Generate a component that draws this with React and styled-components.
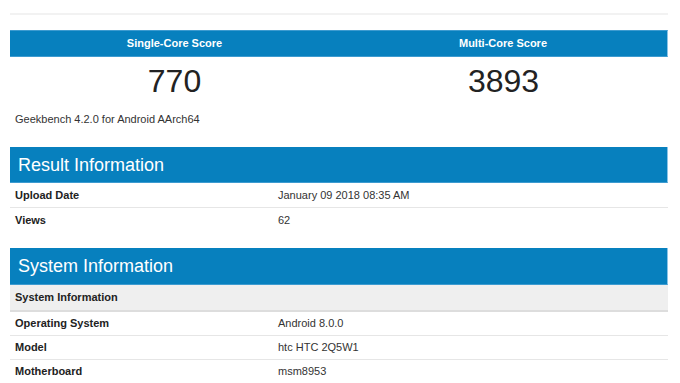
import React from "react";
import styled, { createGlobalStyle } from "styled-components";

const Global = createGlobalStyle`
  html, body { margin: 0; padding: 0; background: #fff; }
  body { font-family: "Liberation Sans", Arial, sans-serif; color: #222; }
`;

const BLUE = "#0780be";

const Page = styled.div`
  width: 658px;
  padding: 13px 0 0 10px;
`;

const TopRule = styled.div`
  height: 2px;
  background: #f2f2f2;
  margin-bottom: 15px;
`;

const ScoreGrid = styled.div`
  display: grid;
  grid-template-columns: 1fr 1fr;
`;

const ScoreHead = styled.div`
  height: 27px;
  background: ${BLUE};
  border-top: 1px solid #3d9bd0;
  border-bottom: 1px solid #3d9bd0;
  box-sizing: border-box;
  color: #fff;
  font-weight: bold;
  font-size: 11px;
  line-height: 25px;
  text-align: center;
  ${(p) => (p.$last ? "border-right: 1px solid #8cc4e6;" : "")}
`;

const ScoreValue = styled.div`
  height: 48px;
  line-height: 48px;
  font-size: 32px;
  text-align: center;
  color: #222;
`;

const Platform = styled.div`
  margin-top: 7px;
  padding-left: 5px;
  font-size: 11px;
  line-height: 14px;
  color: #333;
`;

const SectionHead = styled.div`
  margin-top: ${(p) => p.$gap}px;
  height: ${(p) => p.$h}px;
  line-height: ${(p) => p.$h}px;
  background: ${BLUE};
  border-right: 1px solid #8cc4e6;
  border-bottom: 1px solid #3d9bd0;
  box-sizing: border-box;
  color: #fff;
  font-size: 18px;
  padding-left: 8px;
`;

const Table = styled.div`
  display: grid;
  grid-template-columns: 263px 1fr;
`;

const Cell = styled.div`
  height: ${(p) => p.$h}px;
  line-height: ${(p) => p.$h}px;
  padding-left: 5px;
  font-size: 11px;
  font-weight: ${(p) => (p.$bold ? "bold" : "normal")};
  color: ${(p) => (p.$bold ? "#222" : "#333")};
  border-bottom: ${(p) => (p.$line ? "1px solid #e6e6e6" : "none")};
`;

const SubHead = styled.div`
  grid-column: 1 / -1;
  height: 25px;
  line-height: 25px;
  padding-left: 5px;
  background: #efefef;
  border-bottom: 2px solid #dddddd;
  font-size: 11px;
  font-weight: bold;
  color: #222;
`;

const Row = ({ label, value, line, h = 24 }) => (
  <>
    <Cell $bold $line={line} $h={h}>{label}</Cell>
    <Cell $line={line} $h={h}>{value}</Cell>
  </>
);

export default function App() {
  return (
    <>
      <Global />
      <Page>
        <TopRule />
        <ScoreGrid>
          <ScoreHead>Single-Core Score</ScoreHead>
          <ScoreHead $last>Multi-Core Score</ScoreHead>
          <ScoreValue>770</ScoreValue>
          <ScoreValue>3893</ScoreValue>
        </ScoreGrid>
        <Platform>Geekbench 4.2.0 for Android AArch64</Platform>

        <SectionHead $gap={21} $h={36}>Result Information</SectionHead>
        <Table>
          <Row label="Upload Date" value="January 09 2018 08:35 AM" line />
          <Row label="Views" value="62" />
        </Table>

        <SectionHead $gap={16} $h={37}>System Information</SectionHead>
        <Table>
          <SubHead>System Information</SubHead>
          <Row label="Operating System" value="Android 8.0.0" line h={23} />
          <Row label="Model" value="htc HTC 2Q5W1" line h={23} />
          <Row label="Motherboard" value="msm8953" line h={23} />
        </Table>
      </Page>
    </>
  );
}
